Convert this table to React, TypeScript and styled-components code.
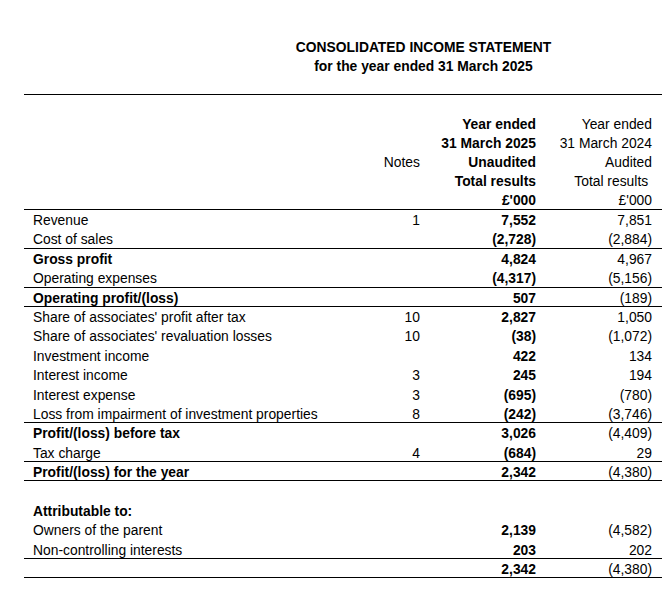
import { createGlobalStyle } from 'styled-components';
import styled from 'styled-components';

interface LineItem {
  label: string;
  note?: string;
  cur?: string;
  prev?: string;
  bold?: boolean;
  rule?: boolean;
}

const GlobalStyle = createGlobalStyle`
  html, body {
    margin: 0;
    padding: 0;
    background: #fff;
  }
  body {
    font-family: 'Liberation Sans', Arial, sans-serif;
    font-size: 13.85px;
    color: #000;
  }
`;

const Page = styled.div`
  width: 668px;
  padding-top: 38px;
`;

const Title = styled.div`
  margin-left: 185px;
  width: 477px;
  text-align: center;
  font-weight: bold;
  line-height: 19px;
  margin-bottom: 18px;
`;

const Sheet = styled.div`
  margin-left: 24px;
  width: 638px;
  border-top: 1px solid #000;
  padding-top: 19px;
`;

const Row = styled.div<{ $rule?: boolean; $head?: boolean; $strong?: boolean }>`
  display: grid;
  grid-template-columns: 316px 80px 116px 126px;
  box-sizing: border-box;
  height: ${p => (p.$head ? 19 : 19.4)}px;
  line-height: ${p => (p.$head ? 19 : 18.4)}px;
  padding-top: ${p => (p.$head ? 1 : p.$rule ? 1 : 2)}px;
  border-top: ${p => (p.$rule ? '1px solid #000' : '0')};
  white-space: nowrap;

  .label {
    padding-left: 9px;
    font-weight: ${p => (p.$strong ? 'bold' : 'normal')};
  }
  .note {
    text-align: right;
  }
  .cur {
    text-align: right;
    font-weight: bold;
  }
  .prev {
    text-align: right;
    padding-right: 10px;
  }
`;

const header: [string, string, string][] = [
  ['', 'Year ended', 'Year ended'],
  ['', '31 March 2025', '31 March 2024'],
  ['Notes', 'Unaudited', 'Audited'],
  ['', 'Total results', 'Total results\u00a0'],
  ['', "£'000", "£'000"],
];

const items: LineItem[] = [
  { label: 'Revenue', note: '1', cur: '7,552', prev: '7,851', rule: true },
  { label: 'Cost of sales', cur: '(2,728)', prev: '(2,884)' },
  { label: 'Gross profit', cur: '4,824', prev: '4,967', bold: true, rule: true },
  { label: 'Operating expenses', cur: '(4,317)', prev: '(5,156)' },
  { label: 'Operating profit/(loss)', cur: '507', prev: '(189)', bold: true, rule: true },
  { label: "Share of associates' profit after tax", note: '10', cur: '2,827', prev: '1,050', rule: true },
  { label: "Share of associates' revaluation losses", note: '10', cur: '(38)', prev: '(1,072)' },
  { label: 'Investment income', cur: '422', prev: '134' },
  { label: 'Interest income', note: '3', cur: '245', prev: '194' },
  { label: 'Interest expense', note: '3', cur: '(695)', prev: '(780)' },
  { label: 'Loss from impairment of investment properties', note: '8', cur: '(242)', prev: '(3,746)' },
  { label: 'Profit/(loss) before tax', cur: '3,026', prev: '(4,409)', bold: true, rule: true },
  { label: 'Tax charge', note: '4', cur: '(684)', prev: '29' },
  { label: 'Profit/(loss) for the year', cur: '2,342', prev: '(4,380)', bold: true, rule: true },
  { label: '', rule: true },
  { label: 'Attributable to:', bold: true },
  { label: 'Owners of the parent', cur: '2,139', prev: '(4,582)' },
  { label: 'Non-controlling interests', cur: '203', prev: '202' },
  { label: '', cur: '2,342', prev: '(4,380)', rule: true },
  { label: '', rule: true },
];

export default function App() {
  return (
    <Page>
      <GlobalStyle />
      <Title>
        <div>CONSOLIDATED INCOME STATEMENT</div>
        <div>for the year ended 31 March 2025</div>
      </Title>
      <Sheet>
        {header.map(([note, cur, prev], i) => (
          <Row key={'h' + i} $head>
            <div className='label' />
            <div className='note'>{note}</div>
            <div className='cur'>{cur}</div>
            <div className='prev'>{prev}</div>
          </Row>
        ))}
        {items.map((item, i) => (
          <Row key={i} $rule={item.rule} $strong={item.bold}>
            <div className='label'>{item.label}</div>
            <div className='note'>{item.note}</div>
            <div className='cur'>{item.cur}</div>
            <div className='prev'>{item.prev}</div>
          </Row>
        ))}
      </Sheet>
    </Page>
  );
}
